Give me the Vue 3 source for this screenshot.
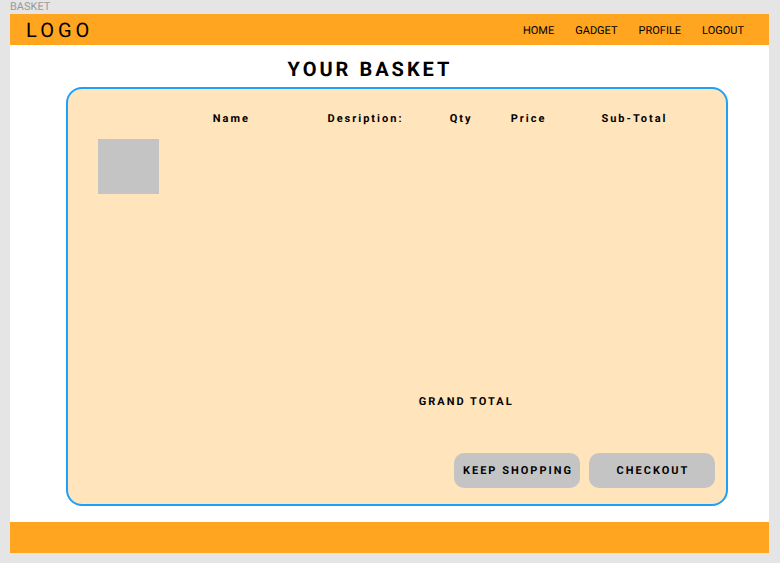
<script setup>
const links = ['HOME', 'GADGET', 'PROFILE', 'LOGOUT']
const columns = ['Name', 'Desription:', 'Qty', 'Price', 'Sub-Total']
</script>

<template>
  <div class="canvas">
    <div class="frame-label">BASKET</div>
    <div class="frame">
      <header class="topbar">
        <a class="logo" href="#">LOGO</a>
        <nav class="nav">
          <a v-for="link in links" :key="link" href="#">{{ link }}</a>
        </nav>
      </header>
      <main class="content">
        <h1 class="title">YOUR BASKET</h1>
        <section class="basket">
          <table class="items">
            <colgroup>
              <col class="col-image" />
              <col class="col-name" />
              <col class="col-description" />
              <col class="col-qty" />
              <col class="col-price" />
              <col />
            </colgroup>
            <thead>
              <tr>
                <td></td>
                <th v-for="column in columns" :key="column" scope="col">{{ column }}</th>
              </tr>
            </thead>
            <tbody>
              <tr>
                <td><div class="thumb"></div></td>
                <td v-for="column in columns" :key="column"></td>
              </tr>
            </tbody>
          </table>
          <div class="total">GRAND TOTAL</div>
          <div class="actions">
            <button type="button">KEEP SHOPPING</button>
            <button type="button">CHECKOUT</button>
          </div>
        </section>
      </main>
      <footer class="bottombar"></footer>
    </div>
  </div>
</template>

<style>
body {
  margin: 0;
  background: #e5e5e5;
}
</style>

<style scoped>
.canvas {
  box-sizing: border-box;
  min-height: 100vh;
  display: flex;
  flex-direction: column;
  padding: 0 11px 10px 10px;
  background: #e5e5e5;
  color: #000;
  font-family: Roboto, "Liberation Sans", sans-serif;
  text-rendering: geometricPrecision;
}
.frame-label {
  height: 14px;
  line-height: 13px;
  font-size: 11px;
  color: #999;
}
.frame {
  flex: 1;
  display: flex;
  flex-direction: column;
  background: #fff;
}
.topbar {
  display: flex;
  align-items: center;
  justify-content: space-between;
  height: 31px;
  padding: 0 25px 0 16px;
  background: #ffa51f;
}
.topbar a {
  color: inherit;
  text-decoration: none;
}
.logo {
  font-size: 20px;
  letter-spacing: 4px;
}
.nav {
  display: flex;
  gap: 21px;
  font-size: 11px;
  line-height: 16px;
  padding-top: 2px;
}
.content {
  flex: 1;
  display: flex;
  flex-direction: column;
  padding: 12px 41px 16px 56px;
}
.title {
  margin: 0;
  padding-right: 54px;
  height: 30px;
  line-height: 24px;
  font-size: 20px;
  font-weight: 700;
  letter-spacing: 3px;
  text-align: center;
}
.basket {
  flex: 1;
  display: flex;
  flex-direction: column;
  padding: 20px 11px 16px 30px;
  border: 2px solid #1da1f8;
  border-radius: 16px;
  background: #ffe4bc;
  font-size: 11px;
  font-weight: 700;
}
.items {
  width: 100%;
  table-layout: fixed;
  border-collapse: collapse;
}
.items th,
.items td {
  padding: 0;
  text-align: left;
}
.items th {
  height: 18px;
  letter-spacing: 2px;
}
.items tbody td {
  padding-top: 12px;
}
.col-image,
.col-name {
  width: 18.6%;
}
.col-description {
  width: 19.8%;
}
.col-qty {
  width: 9.9%;
}
.col-price {
  width: 14.7%;
}
.thumb {
  width: 61px;
  height: 55px;
  background: #c4c4c4;
}
.total {
  margin: auto 0 43px 52%;
  line-height: 16px;
  letter-spacing: 2px;
}
.actions {
  display: flex;
  justify-content: flex-end;
  gap: 9px;
}
.actions button {
  width: 126px;
  height: 35px;
  padding: 0 0 0 2px;
  border: 0;
  border-radius: 10px;
  background: #c4c4c4;
  color: inherit;
  font: inherit;
  letter-spacing: 2px;
  text-rendering: inherit;
  white-space: nowrap;
}
.bottombar {
  height: 31px;
  background: #ffa51f;
}
</style>
